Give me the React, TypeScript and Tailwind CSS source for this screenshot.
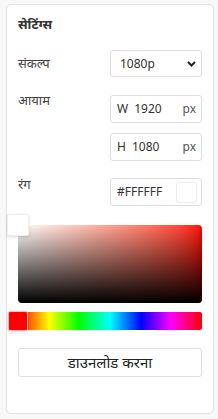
const font = { fontFamily: '"Noto Sans", "Noto Sans Devanagari", "Lohit Devanagari", sans-serif' };

const Field: React.FC<{ prefix?: string; value: string; suffix?: string; swatch?: boolean }> = ({ prefix, value, suffix, swatch }) => (
  <div className="w-[92px] h-[28px] border border-[#dedede] rounded-[3px] bg-white flex items-center pl-[6px] pr-[4px] text-[12px] text-[#333]">
    {prefix && <span className="mr-[6px]">{prefix}</span>}
    <span className="flex-1">{value}</span>
    {suffix && <span className="text-[#555] mr-[1px]">{suffix}</span>}
    {swatch && <span className="w-[21px] h-[21px] border border-[#ececec] rounded-[3px] bg-white" />}
  </div>
);

export default function App() {
  return (
    <div className="w-[218px] h-[419px] bg-[#f8f8f8] pl-[6px] pr-[4px] pt-[4px] pb-[5px]" style={font}>
      <div className="h-full border border-[#e2e2e2] rounded-[5px] bg-white pl-[11px] pr-[11px] pt-[10px] flex flex-col">
        <h2 className="text-[13px] font-bold text-[#333] leading-[18px]">सेटिंग्स</h2>

        <div className="flex items-center justify-between mt-[17px]">
          <span className="text-[13px] text-[#444]">संकल्प</span>
          <div className="w-[92px] h-[27px] border border-[#dedede] rounded-[3px] flex items-center pl-[9px] pr-[5px] text-[12px] text-[#333]">
            <span className="flex-1">1080p</span>
            <svg width="9" height="6" viewBox="0 0 9 6" fill="none">
              <path d="M1 1l3.5 3.5L8 1" stroke="#222" strokeWidth="2" />
            </svg>
          </div>
        </div>

        <div className="flex justify-between mt-[18px]">
          <span className="text-[13px] text-[#444] -mt-[4px]">आयाम</span>
          <div className="flex flex-col gap-[10px]">
            <Field prefix="W" value="1920" suffix="px" />
            <Field prefix="H" value="1080" suffix="px" />
          </div>
        </div>

        <div className="flex justify-between mt-[17px]">
          <span className="text-[13px] text-[#444] -mt-[3px]">रंग</span>
          <Field value="#FFFFFF" swatch />
        </div>

        <div className="relative mt-[19px] h-[78px] rounded-[4px] overflow-visible">
          <div className="absolute inset-0 rounded-[4px] bg-gradient-to-r from-white to-[#ff0000]" />
          <div className="absolute inset-0 rounded-[4px] bg-gradient-to-b from-transparent to-black" />
          <div className="absolute -left-[11px] -top-[11px] w-[22px] h-[22px] bg-white rounded-[2px] border border-[#eee] shadow-[0_1px_3px_rgba(0,0,0,0.15)]" />
        </div>

        <div className="relative mt-[9px] h-[18px]">
          <div className="absolute inset-0 rounded-[2px] bg-[linear-gradient(to_right,#f00_0%,#ff0_17%,#0f0_33%,#0ff_50%,#00f_67%,#f0f_83%,#f00_100%)]" />
          <div className="absolute -left-[10px] -top-[1px] w-[20px] h-[20px] bg-[#ff0000] rounded-[2px] border border-[#f3c0c0] shadow-[0_1px_3px_rgba(0,0,0,0.15)]" />
        </div>

        <button className="mt-[18px] h-[29px] w-full border border-[#dedede] rounded-[3px] text-[15px] text-[#222] bg-white">
          डाउनलोड करना
        </button>
      </div>
    </div>
  );
}
